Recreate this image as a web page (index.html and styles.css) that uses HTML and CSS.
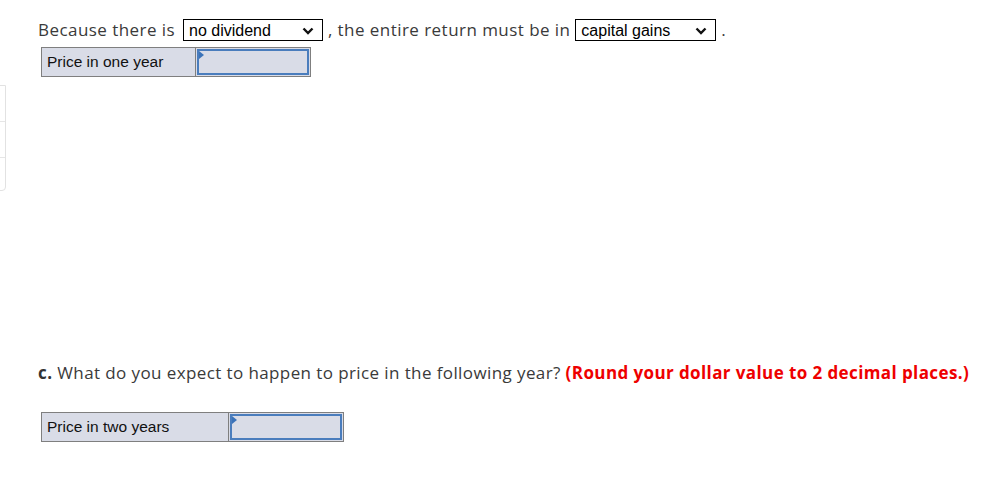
FILE: index.html
```html
<!DOCTYPE html>
<html>
<head>
<meta charset="utf-8">
<link rel="stylesheet" href="styles.css">
</head>
<body>
<div class="side-stub"><div class="stub-row"></div><div class="stub-row"></div><div class="stub-row last"></div></div>
<main class="content">
  <p class="line1">Because there is <span class="dd dd-a"><span class="dd-text">no dividend</span><svg class="chev" width="12" height="8" viewBox="0 0 12 8"><path d="M1.5 1.5 L6 6 L10.5 1.5" fill="none" stroke="#111" stroke-width="2.4"/></svg></span> , the entire return must be in <span class="dd dd-b"><span class="dd-text">capital gains</span><svg class="chev" width="12" height="8" viewBox="0 0 12 8"><path d="M1.5 1.5 L6 6 L10.5 1.5" fill="none" stroke="#111" stroke-width="2.4"/></svg></span> .</p>
  <div class="ans-table t1">
    <div class="label-cell l1">Price in one year</div>
    <div class="input-cell i1"><span class="flag"></span></div>
  </div>
  <p class="question"><b class="qlabel">c.</b> What do you expect to happen to price in the following year? <b class="red">(Round your dollar value to 2 decimal places.)</b></p>
  <div class="ans-table t2">
    <div class="label-cell l2">Price in two years</div>
    <div class="input-cell i2"><span class="flag"></span></div>
  </div>
</main>
</body>
</html>
```
FILE: styles.css
```css
html, body { margin: 0; padding: 0; background: #fff; }
body { width: 997px; height: 488px; overflow: hidden; position: relative; font-family: "Open Sans", "Lato", sans-serif; color: #3a3a3a; }
.side-stub { position: absolute; left: -10px; top: 85px; width: 14px; border: 1px solid #e2e2e2; border-radius: 0 0 4px 0; }
.stub-row { height: 35px; border-bottom: 1px solid #e6e6e6; }
.stub-row.last { height: 32px; border-bottom: none; }
.content { padding: 19px 0 0 38px; display: flex; flex-direction: column; align-items: flex-start; }
.line1 { margin: 0; font-size: 17px; letter-spacing: 0.45px; line-height: 22px; height: 22px; display: flex; align-items: center; white-space: pre; }
.dd { display: inline-flex; align-items: center; justify-content: space-between; box-sizing: border-box; height: 22px; border: 1px solid #000; padding: 1px 8px 0 5px; font-family: "Liberation Sans", Arial, sans-serif; font-size: 16px; letter-spacing: 0; color: #000; }
.dd-a { width: 140px; margin-left: 3px; }
.dd-b { width: 141px; }
.dd-text { line-height: 20px; }
.chev { display: block; }
.ans-table { display: flex; border: 1px solid #7f7f7f; background: #d9dce7; margin-left: 3px; box-sizing: border-box; }
.t1 { margin-top: 6px; height: 30px; }
.t2 { margin-top: 28px; height: 30px; }
.label-cell { box-sizing: border-box; padding: 0 0 0 5px; font-family: "Liberation Sans", Arial, sans-serif; font-size: 15.5px; color: #111; display: flex; align-items: center; border-right: 1px solid #7f7f7f; }
.l1 { width: 154px; }
.l2 { width: 187px; }
.input-cell { position: relative; box-sizing: border-box; border: 2px solid #4a7dbd; margin: 1px; background: #d9dce7; }
.i1 { width: 112px; }
.i2 { width: 112px; }
.flag { position: absolute; left: 0; top: 0; width: 0; height: 0; border-top: 4px solid transparent; border-bottom: 4px solid transparent; border-left: 5px solid #3b73b9; }
.question { margin: 285px 0 0 0; font-size: 17px; letter-spacing: 0.4px; line-height: 22px; color: #3a3a3a; white-space: nowrap; }
.qlabel { color: #333; font-weight: 700; }
.red { color: #ee0000; font-weight: 700; }
```
